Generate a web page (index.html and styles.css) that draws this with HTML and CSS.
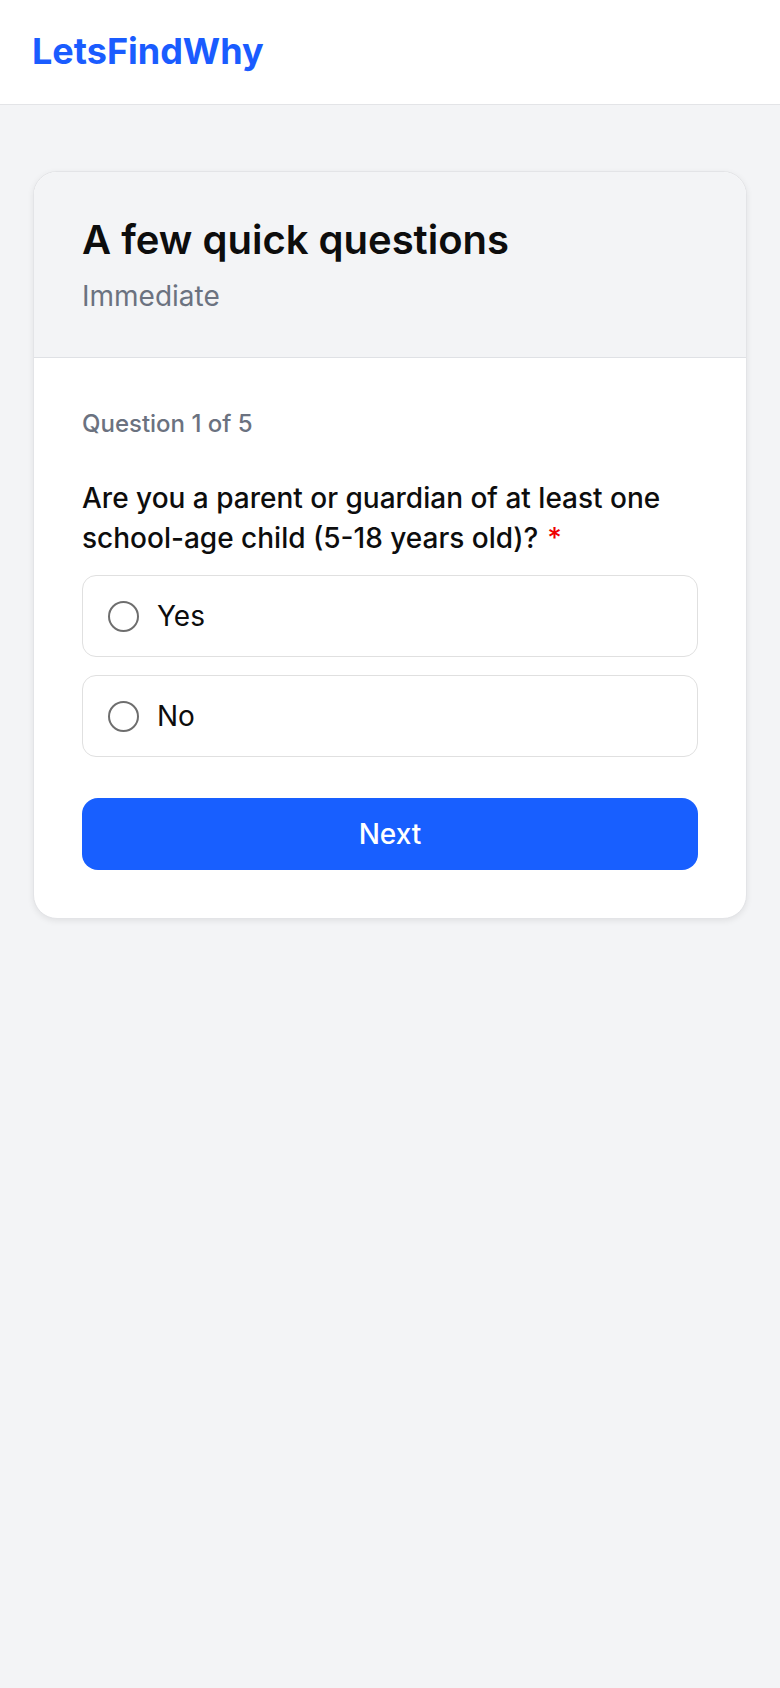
FILE: index.html
```html
<!DOCTYPE html>
<html>
	<head>
		<meta charset="utf-8" />
		<title>LetsFindWhy</title>
		<link rel="stylesheet" href="styles.css">
	</head>
	<body>
		<div class="topbar">
			<a href="javascript:;" class="logo">LetsFindWhy</a>
		</div>

		<div class="page">
			<div class="card">
				<div class="card-head">
					<h1 class="title">A few quick questions</h1>
					<p class="subtitle">Immediate</p>
				</div>
				<div class="card-body">
					<div class="step">Question 1 of 5</div>
					<div class="question">Are you a parent or guardian of at least one school-age child (5-18 years old)?<span class="req">*</span></div>

					<div class="options">
						<label class="option">
							<input type="radio" name="q1" value="yes">
							<span class="dot"></span>
							<span class="option-text">Yes</span>
						</label>
						<label class="option">
							<input type="radio" name="q1" value="no">
							<span class="dot"></span>
							<span class="option-text">No</span>
						</label>
					</div>

					<a href="javascript:;" class="btn">Next</a>
				</div>
			</div>
		</div>
	</body>
</html>
```

FILE: styles.css
```css
*{
	margin: 0;
	padding: 0;
	box-sizing: border-box;
	text-decoration: none;
}
body{
	background: #f3f4f6;
	font-family: Inter, "Noto Sans", sans-serif;
	color: #111;
}
.topbar{
	height: 105px;
	background: #fff;
	border-bottom: 1px solid #e3e4e7;
	display: flex;
	align-items: center;
	padding: 0 32px 3px;
}
.logo{
	font-size: 36px;
	font-weight: 700;
	color: #1a5cff;
}
.page{
	padding: 66px 33px 40px;
}
.card{
	background: #fff;
	border: 1px solid #e3e4e7;
	border-radius: 24px;
	overflow: hidden;
	box-shadow: 0 2px 6px rgba(0,0,0,0.08);
}
.card-head{
	background: #f3f4f6;
	border-bottom: 1px solid #dfe1e5;
	padding: 44px 48px 40px;
}
.title{
	font-size: 40px;
	line-height: 48px;
	font-weight: 600;
	color: #0d0d0d;
}
.subtitle{
	margin-top: 11px;
	font-size: 28px;
	line-height: 42px;
	color: #6b7280;
}
.card-body{
	padding: 48px 48px 48px;
}
.step{
	font-size: 24px;
	line-height: 36px;
	font-weight: 500;
	color: #6b7280;
}
.question{
	margin-top: 36px;
	font-size: 28px;
	line-height: 40px;
	font-weight: 500;
	color: #0d0d0d;
}
.req{
	margin-left: 9px;
	color: #e00;
}
.options{
	margin-top: 17px;
	display: flex;
	flex-direction: column;
	gap: 18px;
}
.option{
	height: 82px;
	border: 1px solid #e0e0e0;
	border-radius: 14px;
	display: flex;
	align-items: center;
	gap: 18px;
	padding: 0 25px;
	cursor: pointer;
}
.option input{
	display: none;
}
.dot{
	width: 31px;
	height: 31px;
	border: 2px solid #6e6e6e;
	border-radius: 50%;
	flex-shrink: 0;
}
.option input:checked + .dot{
	border-color: #185fff;
	box-shadow: inset 0 0 0 6px #fff;
	background: #185fff;
}
.option-text{
	font-size: 28px;
	color: #0d0d0d;
}
.btn{
	margin-top: 41px;
	height: 72px;
	display: flex;
	align-items: center;
	justify-content: center;
	background: #185fff;
	color: #fff;
	border-radius: 16px;
	font-size: 28px;
	font-weight: 500;
}
```
